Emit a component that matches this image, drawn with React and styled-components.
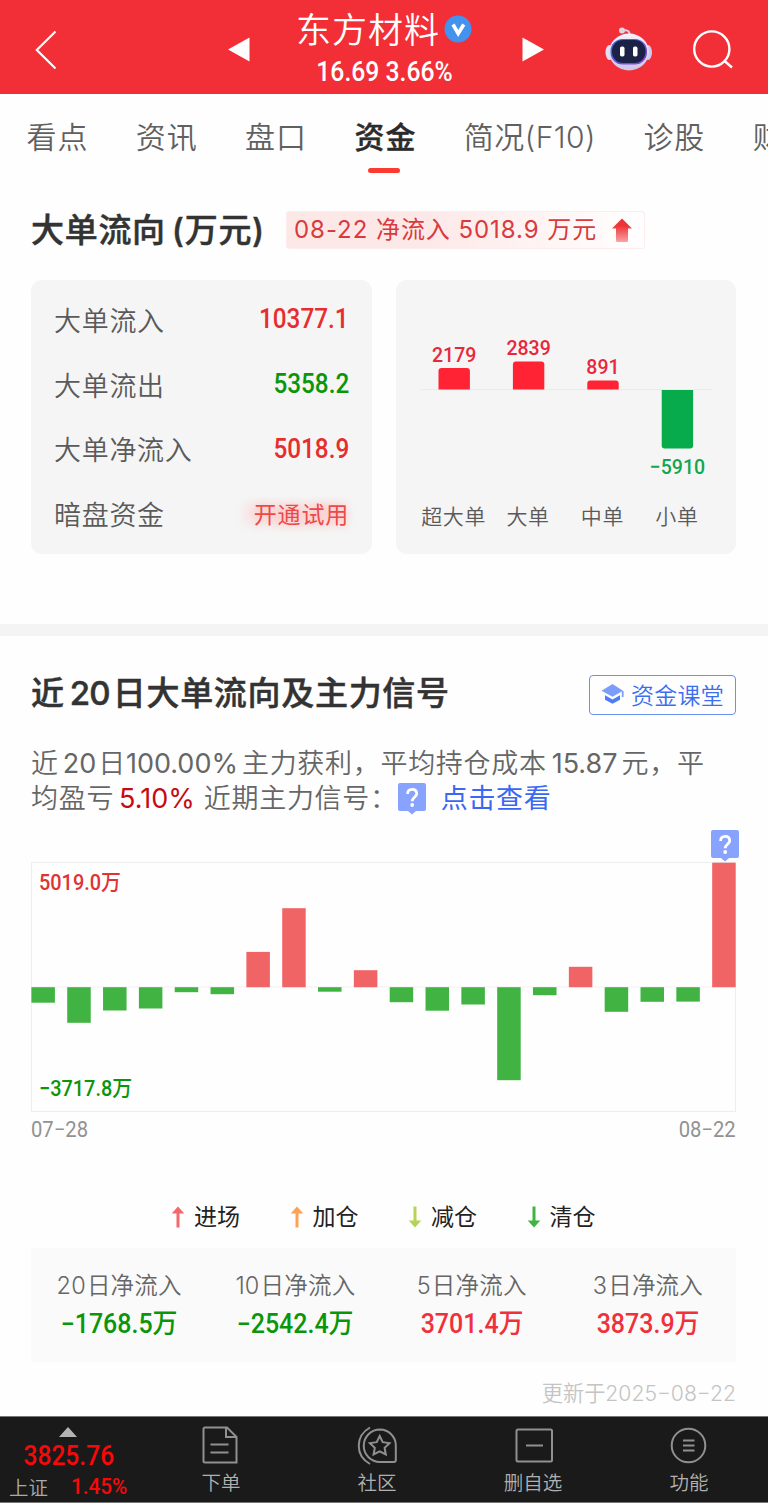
import React from "react";
import styled, { createGlobalStyle } from "styled-components";

const tabs = ["看点", "资讯", "盘口", "资金", "简况(F10)", "诊股", "财务"];

const flows = [
  { label: "大单流入", value: "10377.1", color: "#e62e2e" },
  { label: "大单流出", value: "5358.2", color: "#0a960a" },
  { label: "大单净流入", value: "5018.9", color: "#e62e2e" },
];

const orders = [
  { label: "超大单", value: 2179, height: 21.5 },
  { label: "大单", value: 2839, height: 28 },
  { label: "中单", value: 891, height: 9 },
  { label: "小单", value: -5910, height: -58.5 },
];

const days = [
  -15.5, -35.6, -23.3, -21.3, -5, -7, 35.3, 79, -4.5, 17, -15, -23.5, -17.3,
  -93, -8, 20.4, -24.6, -14.6, -14.4, 124.5,
];

const legend = [
  { label: "进场", color: "#f1696b", up: true },
  { label: "加仓", color: "#fda255", up: true },
  { label: "减仓", color: "#b3d455", up: false },
  { label: "清仓", color: "#41b342", up: false },
];

const stats = [
  { day: "20", value: "-1768.5", color: "#0a960a" },
  { day: "10", value: "-2542.4", color: "#0a960a" },
  { day: "5", value: "3701.4", color: "#f0303a" },
  { day: "3", value: "3873.9", color: "#f0303a" },
];

const minus = (n) => String(n).replace("-", "−");

const Flag = () => (
  <svg width="28" height="32" viewBox="0 0 28 32">
    <path
      d="M2 0h24a2 2 0 0 1 2 2v24a2 2 0 0 1-2 2h-8l-4 3.5-4-3.5H2a2 2 0 0 1-2-2V2a2 2 0 0 1 2-2z"
      fill="#88a3fd"
    />
    <path
      d="M9.600 11c0-2.900 1.800-4.600 4.600-4.600s4.500 1.700 4.500 4.300c0 3.400-4.500 3.700-4.500 7.500"
      fill="none"
      stroke="#fff"
      strokeWidth="2.800"
    />
    <circle cx="14.200" cy="22" r="1.900" fill="#fff" />
  </svg>
);

const Robot = () => (
  <svg width="48" height="46" viewBox="0 0 48 46">
    <defs>
      <linearGradient id="shell" x1="0" y1="0" x2="0" y2="1">
        <stop offset="0" stopColor="#f4f0fb" />
        <stop offset="1" stopColor="#cdc6ea" />
      </linearGradient>
      <linearGradient id="rim" x1="0" y1="0" x2="1" y2="1">
        <stop offset="0" stopColor="#3b6cd8" />
        <stop offset="1" stopColor="#8b3fd6" />
      </linearGradient>
    </defs>
    <path d="M17 3.500c5-1 7.500 0 8 5" fill="none" stroke="#dcd3e6" strokeWidth="2" />
    <circle cx="17" cy="3.500" r="3" fill="#e3d4de" />
    <ellipse cx="4.500" cy="25.500" rx="4" ry="7.500" fill="#e2dff5" />
    <ellipse cx="43" cy="25.500" rx="4" ry="7.500" fill="#cfc9ee" />
    <ellipse cx="24" cy="25" rx="20" ry="18.500" fill="url(#shell)" />
    <rect x="5.500" y="12" width="36.500" height="25.500" rx="12" fill="url(#rim)" />
    <rect x="7" y="13" width="33.500" height="23" rx="11" fill="#1c2245" />
    <rect x="15" y="19.500" width="4.500" height="10" rx="1.800" fill="#fff" />
    <rect x="28" y="19.500" width="4.500" height="10" rx="1.800" fill="#fff" />
  </svg>
);

const OrderIcon = () => (
  <svg width="40" height="40" viewBox="0 0 40 40">
    <path d="M4 2.500h22l9.500 9.500v25.500h-31.500a1.500 1.500 0 0 1-1.500-1.500v-32a1.500 1.500 0 0 1 1.500-1.500z" />
    <path d="M25 2.500v9.500h10.500M9.500 19.500h18M9.500 27.500h18" />
  </svg>
);

const CommunityIcon = () => (
  <svg width="40" height="40" viewBox="0 0 40 40">
    <path d="M23 4.500a16 16 0 1 0 0 32.500h14a1.800 1.800 0 0 0 1.800-1.800V20.500A16 16 0 0 0 23 4.500z" />
    <path d="M13 2.500C-2 11-2 30.500 13 39" />
    <path d="M22.700 11l3 6.200 6.800.9-4.900 4.700 1.200 6.700-6.100-3.200-6.100 3.200 1.200-6.700-4.900-4.700 6.800-.9z" />
  </svg>
);

const RemoveIcon = () => (
  <svg width="40" height="40" viewBox="0 0 40 40">
    <rect x="3.500" y="4.500" width="35.500" height="32" rx="1.500" />
    <path d="M13 20.500h17" />
  </svg>
);

const MoreIcon = () => (
  <svg width="40" height="40" viewBox="0 0 40 40">
    <circle cx="19.500" cy="20.500" r="16.800" />
    <path d="M14 15.500h11.500M14 20.500h11.500M14 25.500h11.500" />
  </svg>
);

const actions = [
  { label: "下单", Icon: OrderIcon },
  { label: "社区", Icon: CommunityIcon },
  { label: "删自选", Icon: RemoveIcon },
  { label: "功能", Icon: MoreIcon },
];

function App() {
  return (
    <Page>
      <GlobalStyle />
      <Header>
        <svg width="22" height="40" viewBox="0 0 22 40">
          <path d="M20.500 1.500L1.800 20l18.700 18.500" fill="none" stroke="#fff" strokeWidth="2.200" />
        </svg>
        <Prev width="22" height="26" viewBox="0 0 22 26">
          <path d="M0 12.500L21.500 .5v24z" fill="#fff" />
        </Prev>
        <Stock>
          <Name>
            东方材料
            <svg width="28" height="28" viewBox="0 0 28 28">
              <circle cx="14" cy="14" r="13.500" fill="#4292ee" />
              <path d="M9 9.500l5.200 9 5.600-9" fill="none" stroke="#fff" strokeWidth="3.600" />
            </svg>
          </Name>
          <Quote>16.69 3.66%</Quote>
        </Stock>
        <svg width="22" height="26" viewBox="0 0 22 26">
          <path d="M22 12.500L.5 .5v24z" fill="#fff" />
        </svg>
        <RobotButton>
          <Robot />
        </RobotButton>
        <svg width="40" height="40" viewBox="0 0 40 40" fill="none" stroke="#fff" strokeWidth="2.400">
          <circle cx="18.800" cy="19" r="17.600" />
          <path d="M31 30.500l8 7" />
        </svg>
      </Header>

      <Tabs>
        {tabs.map((tab) => (
          <Tab key={tab} $active={tab === "资金"} $tight={tab.length > 2}>
            {tab}
          </Tab>
        ))}
      </Tabs>

      <FlowSection>
        <TitleRow>
          <Title>
            大单流向
            <Gap $w={6} />
            (万元)
          </Title>
          <NetBadge>
            08-22 净流入 5018.9 万元
            <svg width="20" height="25" viewBox="0 0 20 25">
              <defs>
                <linearGradient id="up" x1="0" y1="0" x2="0" y2="1">
                  <stop offset="0.300" stopColor="#ee3336" />
                  <stop offset="1" stopColor="#f9a3a5" />
                </linearGradient>
              </defs>
              <path d="M10 .5l10 10h-4v12a1.500 1.500 0 0 1-1.500 1.500h-9a1.500 1.500 0 0 1-1.500-1.500v-12H0z" fill="url(#up)" />
            </svg>
          </NetBadge>
        </TitleRow>

        <Cards>
          <FlowCard>
            {flows.map(({ label, value, color }) => (
              <FlowRow key={label}>
                <span>{label}</span>
                <FlowValue $color={color}>{value}</FlowValue>
              </FlowRow>
            ))}
            <FlowRow>
              <span>暗盘资金</span>
              <Trial>开通试用</Trial>
            </FlowRow>
          </FlowCard>

          <OrderCard width="340" height="274" viewBox="0 0 340 274">
            <path d="M24 109.700h292" stroke="#ebebeb" />
            {orders.map(({ label, value, height }, i) => {
              const x = 58.2 + i * 74.4;
              const up = height > 0;
              const h = Math.abs(height);
              return (
                <g key={label}>
                  <path
                    d={
                      up
                        ? `M${x - 15.700} 109.500v${3 - h}q0-3 3-3h25.400q3 0 3 3v${h - 3}z`
                        : `M${x - 15.700} 110v${h - 3}q0 3 3 3h25.400q3 0 3-3v${3 - h}z`
                    }
                    fill={up ? "#ff2334" : "#07ab4b"}
                  />
                  <OrderValue x={x} y={up ? 103.5 - h : 194} $up={up}>
                    {minus(value)}
                  </OrderValue>
                  <OrderLabel x={x - 0.5} y="243.500">
                    {label}
                  </OrderLabel>
                </g>
              );
            })}
          </OrderCard>
        </Cards>
      </FlowSection>

      <SignalSection>
        <SignalHead>
          <Title>
            近<Gap $w={5} />
            <TitleFigure>20</TitleFigure>
            <Gap $w={3} />
            日大单流向及主力信号
          </Title>
          <ClassButton>
            <svg width="24" height="22" viewBox="0 0 24 22">
              <path d="M11.500 1L22 7.800l-10.500 6L.5 7.800z" fill="#7d9dfb" />
              <path d="M4 12.200l7.500 4.300 7.500-4.300v4.600l-7.500 4-7.500-4z" fill="#4c7df6" />
              <path d="M21.700 8v6" stroke="#7d9dfb" strokeWidth="1.800" />
            </svg>
            资金课堂
          </ClassButton>
        </SignalHead>

        <Summary>
          近<Gap $w={4} />
          <Figure>20</Figure>
          <Gap $w={2} />
          日
          <Gap $w={0} />
          <Figure>100.00%</Figure>
          <Gap $w={4} />
          主力获利，平均持仓成本
          <Gap $w={5} />
          <Figure>15.87</Figure>
          <Gap $w={4} />
          元，平
        </Summary>
        <Summary>
          均盈亏
          <Gap $w={5} />
          <Figure $color="#c60a12">5.10%</Figure>
          <Gap $w={9} />
          近期主力信号：
          <FlagSlot>
            <Flag />
          </FlagSlot>
          <Link>点击查看</Link>
        </Summary>

        <Chart>
          <svg width="705" height="250" viewBox="0 0 705 250">
            <rect x=".5" y=".5" width="704" height="249" fill="none" stroke="#eeeeee" />
            <path d="M0 125h705" stroke="#f1f1f1" />
            {days.map((v, i) => (
              <rect
                key={i}
                x={0.4 + i * 35.83}
                y={v > 0 ? 125.2 - v : 125.2}
                width="23.500"
                height={Math.abs(v)}
                fill={v > 0 ? "#f06466" : "#40b342"}
              />
            ))}
            <Scale x="8" y="28.500" fill="#e03333">
              5019.0万
            </Scale>
            <Scale x="8" y="234" fill="#0a960a">
              −3717.8万
            </Scale>
          </svg>
          <ChartFlag>
            <Flag />
          </ChartFlag>
        </Chart>
        <Dates>
          <DateLabel>07−28</DateLabel>
          <DateLabel $end>08−22</DateLabel>
        </Dates>

        <Legend>
          {legend.map(({ label, color, up }) => (
            <LegendItem key={label}>
              <svg width="14" height="22" viewBox="0 0 14 22">
                <path
                  d="M7 .5l6.300 7h-4.800v14h-3v-14h-4.800z"
                  fill={color}
                  transform={up ? undefined : "rotate(180 7 11)"}
                />
              </svg>
              {label}
            </LegendItem>
          ))}
        </Legend>

        <Stats>
          {stats.map(({ day, value, color }) => (
            <Stat key={day}>
              <StatLabel>
                {day}
                <Gap $w={1} />
                日净流入
              </StatLabel>
              <StatValue $color={color}>{minus(value)}万</StatValue>
            </Stat>
          ))}
        </Stats>
        <Updated>更新于2025−08−22</Updated>
      </SignalSection>

      <Footer>
        <Index>
          <svg width="18" height="10" viewBox="0 0 18 10">
            <path d="M9 0l9 10H0z" fill="#b4b4b4" />
          </svg>
          <IndexValue>3825.76</IndexValue>
          <IndexRow>
            上证
            <IndexRate>1.45%</IndexRate>
          </IndexRow>
        </Index>
        {actions.map(({ label, Icon }) => (
          <Action key={label}>
            <Icon />
            {label}
          </Action>
        ))}
      </Footer>
    </Page>
  );
}

export default App;

const GlobalStyle = createGlobalStyle`
  * {
    box-sizing: border-box;
  }

  body {
    margin: 0;
    background: #fefefe;
    font-family: Inter, "Noto Sans CJK SC", sans-serif;
    color: #333;
  }

  svg {
    display: block;
    flex-shrink: 0;
  }
`;

const Page = styled.div`
  width: 768px;
  height: 1503px;
  overflow: hidden;
`;

const Header = styled.header`
  height: 94px;
  padding: 5px 0 0 35px;
  display: flex;
  align-items: center;
  background: #f22f37;
  color: #fff;
`;

const Prev = styled.svg`
  margin-left: 171px;
`;

const Stock = styled.div`
  width: 272px;
  height: 89px;
  padding-top: 2px;
  display: flex;
  flex-direction: column;
  align-items: center;
`;

const Name = styled.div`
  height: 46px;
  display: flex;
  align-items: center;
  font-size: 35px;
  font-weight: 350;
  line-height: 46px;
  letter-spacing: 1px;

  svg {
    margin: 0 4px 2px 4px;
  }
`;

const Quote = styled.div`
  margin: 1px 3px 0 0;
  font-family: Roboto, sans-serif;
  font-size: 27px;
  font-weight: 500;
  line-height: 36px;
  transform: scaleX(0.915);
`;

const RobotButton = styled.div`
  margin: 0 40px 0 61px;
`;

const Tabs = styled.nav`
  height: 94px;
  padding: 21px 0 0 26.5px;
  display: flex;
  gap: 47.3px;
  overflow: hidden;
`;

const Tab = styled.div`
  height: 58px;
  display: flex;
  flex-direction: column;
  align-items: center;
  flex-shrink: 0;
  font-size: 30px;
  line-height: 44px;
  letter-spacing: ${({ $tight }) => ($tight ? 0.5 : 1)}px;
  font-weight: ${({ $active }) => ($active ? 500 : 350)};
  -webkit-text-stroke: ${({ $active }) => ($active ? 0.4 : 0)}px;
  color: ${({ $active }) => ($active ? "#2b2b2b" : "#606060")};

  &::after {
    content: "";
    width: 32px;
    height: 6px;
    margin: 9px 2px 0 0;
    border-radius: 3px;
    background: ${({ $active }) => ($active ? "#fb3a30" : "none")};
  }
`;

const FlowSection = styled.section`
  height: 448px;
  padding: 20px 32px 0 31px;
  border-bottom: 12px solid #f4f4f4;
`;

const TitleRow = styled.div`
  height: 44px;
  display: flex;
  align-items: center;
`;

const Title = styled.h2`
  margin: 0;
  font-size: 33px;
  font-weight: 500;
  line-height: 44px;
  letter-spacing: 0.7px;
  white-space: nowrap;
  -webkit-text-stroke: 0.5px;
`;

const TitleFigure = styled.span`
  letter-spacing: -0.8px;
`;

const Gap = styled.span`
  display: inline-block;
  width: ${({ $w }) => $w}px;
`;

const NetBadge = styled.div`
  width: 359px;
  height: 38px;
  margin-left: auto;
  margin-right: 91px;
  padding: 0 12px 0 7px;
  display: flex;
  align-items: center;
  justify-content: space-between;
  border: 1px solid #fdecec;
  border-radius: 3px;
  background: linear-gradient(90deg, #fde8e8 40%, #fffdfd 95%);
  color: #d93a3c;
  font-size: 24px;
  line-height: 36px;
  letter-spacing: 0.95px;
  white-space: nowrap;
`;

const Cards = styled.div`
  display: flex;
  justify-content: space-between;
  margin-top: 28px;
`;

const FlowCard = styled.div`
  width: 341px;
  height: 274px;
  padding: 7px 23px;
  border-radius: 11px;
  background: #f5f5f5;
`;

const FlowRow = styled.div`
  height: 64.7px;
  display: flex;
  align-items: center;
  justify-content: space-between;
  font-size: 27px;
  font-weight: 350;
  letter-spacing: 0.7px;
  color: #5a5a5a;
`;

const FlowValue = styled.span`
  font-family: Roboto, sans-serif;
  font-size: 27px;
  font-weight: 550;
  letter-spacing: 0;
  transform: scaleX(0.9);
  transform-origin: right;
  color: ${({ $color }) => $color};
`;

const Trial = styled.span`
  margin-bottom: 1px;
  font-size: 23px;
  font-weight: 400;
  letter-spacing: 0.8px;
  color: #ec4a48;
  text-shadow: 0 0 10px #ffaaaa, -12px 0 10px #ffcaca;
`;

const OrderCard = styled.svg`
  border-radius: 11px;
  background: #f5f5f5;
`;

const OrderValue = styled.text`
  font-family: Roboto, sans-serif;
  font-size: 21px;
  font-weight: 500;
  text-anchor: middle;
  transform: scaleX(0.93);
  transform-box: fill-box;
  transform-origin: center;
  fill: ${({ $up }) => ($up ? "#e8283a" : "#12a650")};
`;

const OrderLabel = styled.text`
  font-size: 21px;
  font-weight: 350;
  letter-spacing: 0.7px;
  text-anchor: middle;
  fill: #5a5a5a;
`;

const SignalSection = styled.section`
  height: 780px;
  padding: 34px 32px 0 31px;
`;

const SignalHead = styled.div`
  height: 46px;
  display: flex;
  align-items: center;
  justify-content: space-between;
`;

const ClassButton = styled.div`
  width: 147px;
  height: 40px;
  margin-top: 3px;
  padding-bottom: 2px;
  display: flex;
  align-items: center;
  justify-content: center;
  gap: 6px;
  border: 1.5px solid #6a90f0;
  border-radius: 4px;
  color: #3c6df0;
  font-size: 23px;
  font-weight: 350;
  letter-spacing: 0.3px;
`;

const Summary = styled.div`
  height: 35px;
  display: flex;
  align-items: center;
  font-size: 27px;
  font-weight: 350;
  line-height: 35px;
  letter-spacing: 0.7px;
  color: #666;
  white-space: nowrap;

  ${SignalHead} + & {
    margin-top: 30px;
  }
`;

const Figure = styled.span`
  font-weight: 400;
  letter-spacing: 0;
  color: ${({ $color }) => $color || "inherit"};
`;

const FlagSlot = styled.span`
  margin-right: 15px;
`;

const Link = styled.a`
  color: #3a68f2;
  font-weight: 400;
`;

const Chart = styled.div`
  position: relative;
  height: 250px;
  margin-top: 46px;
`;

const ChartFlag = styled.div`
  position: absolute;
  top: -32px;
  right: -2.5px;
`;

const Scale = styled.text`
  font-family: Roboto, "Noto Sans CJK SC", sans-serif;
  font-size: 22px;
  font-weight: 500;
  transform: scaleX(0.905);
  transform-box: fill-box;
  transform-origin: left;
`;

const Dates = styled.div`
  display: flex;
  justify-content: space-between;
`;

const DateLabel = styled.span`
  font-family: Roboto, sans-serif;
  font-size: 21.5px;
  line-height: 36px;
  transform: scaleX(0.94);
  transform-origin: ${({ $end }) => ($end ? "right" : "left")};
  color: #929292;
`;

const Legend = styled.div`
  height: 30px;
  margin-top: 54px;
  padding-left: 140px;
  display: flex;
`;

const LegendItem = styled.div`
  width: 118.5px;
  display: flex;
  align-items: center;
  gap: 9px;
  font-size: 23px;
  line-height: 30px;
  color: #222;
`;

const Stats = styled.div`
  height: 114px;
  margin-top: 16px;
  padding-top: 18px;
  display: flex;
  background: #fafafa;
`;

const Stat = styled.div`
  flex: 1;
  text-align: center;
`;

const StatLabel = styled.div`
  font-size: 23.5px;
  font-weight: 350;
  line-height: 39px;
  letter-spacing: 0.2px;
  color: #666;
`;

const StatValue = styled.div`
  font-family: Roboto, "Noto Sans CJK SC", sans-serif;
  font-size: 27px;
  font-weight: 500;
  line-height: 39px;
  transform: scaleX(0.925);
  color: ${({ $color }) => $color};
`;

const Updated = styled.div`
  margin-top: 16px;
  text-align: right;
  font-size: 21.2px;
  font-weight: 350;
  line-height: 30px;
  color: #c4c4c4;
`;

const Footer = styled.footer`
  height: 87px;
  display: flex;
  background: #1a1a1a;
  border-top: 1px solid #777;
  border-bottom: 1px solid #777;
`;

const Index = styled.div`
  width: 143px;
  padding: 10px 7px 0 0;
  display: flex;
  flex-direction: column;
  align-items: center;
  font-family: Roboto, sans-serif;
  font-weight: 500;
  color: #f80808;
`;

const IndexValue = styled.div`
  font-size: 27px;
  line-height: 38px;
  margin-left: 2px;
  transform: scaleX(0.91);
`;

const IndexRow = styled.div`
  width: 118px;
  display: flex;
  justify-content: space-between;
  font-family: "Noto Sans CJK SC", sans-serif;
  font-size: 19.5px;
  font-weight: 350;
  line-height: 23px;
  color: #aaa;
`;

const IndexRate = styled.span`
  font-family: Roboto, sans-serif;
  font-size: 22.5px;
  font-weight: 500;
  line-height: 22px;
  transform: scaleX(0.92);
  transform-origin: right;
  color: #f80808;
`;

const Action = styled.div`
  width: 156px;
  padding-top: 8px;
  display: flex;
  flex-direction: column;
  align-items: center;
  font-size: 19.5px;
  font-weight: 350;
  line-height: 37px;
  color: #b0b0b0;

  svg {
    fill: none;
    stroke: #909090;
    stroke-width: 2;
  }
`;
